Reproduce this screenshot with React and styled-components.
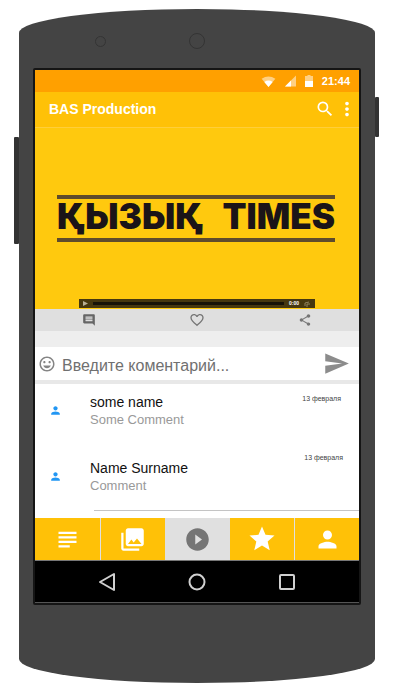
import React from 'react';
import styled, { createGlobalStyle } from 'styled-components';
import {
  MdSearch,
  MdMoreVert,
  MdComment,
  MdShare,
  MdSend,
  MdTagFaces,
  MdPerson,
  MdSubject,
  MdPhotoLibrary,
  MdPlayCircleFilled,
  MdStar,
  MdFavoriteBorder,
} from 'react-icons/md';

const GlobalStyle = createGlobalStyle`
  * { box-sizing: border-box; }
  body {
    margin: 0;
    background: #fff;
    font-family: "Liberation Sans", Arial, sans-serif;
  }
  svg { display: block; flex: none; }
`;

const Stage = styled.main`
  display: grid;
  grid-template-columns: 5px 1fr 4px;
  padding: 9px 27px 9px 14px;
`;

const SideButton = styled.div`
  height: ${(p) => p.$height}px;
  margin-top: ${(p) => p.$top}px;
  background: #333;
  border-radius: 1px;
`;

const Body = styled.div`
  background: #444;
  border-radius: 50% / 24px;
  padding: 0 14px 78px;
`;

const Sensors = styled.div`
  display: grid;
  grid-template-columns: 1fr auto 1fr;
  align-items: center;
  height: 59px;
  padding-top: 5px;
`;

const Lens = styled.span`
  width: ${(p) => p.$size}px;
  height: ${(p) => p.$size}px;
  border: 1px solid #343434;
  border-radius: 50%;
`;

const Proximity = styled(Lens)`
  justify-self: center;
  margin-right: 22px;
`;

const Screen = styled.div`
  border: 2px solid #151515;
  border-radius: 2px;
  background: #fff;
`;

const StatusBar = styled.div`
  display: flex;
  align-items: center;
  justify-content: flex-end;
  gap: 9px;
  height: 22px;
  padding-right: 9px;
  background: #ffa000;
  color: #fff;
  font-size: 11px;
  font-weight: 700;
`;

const AppBar = styled.header`
  display: flex;
  align-items: center;
  height: 36px;
  padding: 0 1px 2px 14px;
  background: #ffc107;
  border-bottom: 1px solid #ffce3a;
`;

const Title = styled.h1`
  flex: 1;
  margin: 0;
  color: #fff;
  font-size: 14px;
  line-height: 20px;
`;

const IconButton = styled.button`
  display: flex;
  align-items: center;
  justify-content: center;
  padding: 0;
  border: 0;
  background: none;
  color: ${(p) => p.$color || '#fff'};
  cursor: pointer;
`;

const SearchButton = styled(IconButton)`
  margin-right: 1px;
  svg { stroke: currentColor; }
`;

const Video = styled.section`
  display: flex;
  flex-direction: column;
  justify-content: space-between;
  height: 181px;
  background: #ffc90e;
`;

const Wordmark = styled.div`
  display: flex;
  justify-content: space-between;
  margin: 67px 24px 0 22px;
  height: 47px;
  border-top: 4px solid #5f4b2c;
  border-bottom: 4px solid #5f4b2c;
  color: #1b1418;
  font: 900 35px/34px Inter, sans-serif;
  white-space: nowrap;
`;

const Player = styled.div`
  display: flex;
  align-items: center;
  gap: 5px;
  height: 9px;
  margin: 0 44px 1px;
  padding: 0 5px 0 3px;
  background: #46380f;
  color: #fff;
  font-size: 5px;
  line-height: 9px;
  font-weight: 700;
`;

const Seek = styled.div`
  flex: 1;
  height: 3px;
  background: #171307;
`;

const Actions = styled.div`
  display: grid;
  grid-template-columns: repeat(3, 1fr);
  height: 22px;
  background: #dfdfdf;
`;

const Composer = styled.form`
  display: flex;
  align-items: center;
  height: 53px;
  padding: 0 9px 0 3px;
  border-top: 16px solid #eee;
  border-bottom: 4px solid #e8e8e8;
  background: #fff;
`;

const CommentInput = styled.input`
  flex: 1;
  min-width: 0;
  height: 32px;
  margin-left: 6px;
  padding: 4px 0 0;
  border: 0;
  outline: 0;
  background: none;
  color: #444;
  font: 16px "Liberation Sans", Arial, sans-serif;
  &::placeholder { color: #707070; opacity: 1; }
`;

const Comments = styled.ul`
  display: grid;
  gap: 6px;
  margin: 0;
  padding: 0;
  list-style: none;
`;

const CommentRow = styled.li`
  display: grid;
  grid-template-columns: 55px 1fr auto;
  height: 60px;
  color: #2196f3;
`;

const Avatar = styled.div`
  padding: 20px 0 0 14px;
`;

const Author = styled.div`
  padding-top: 9px;
  color: #111;
  font-size: 14px;
  line-height: 18px;
`;

const Message = styled.p`
  margin: 0;
  color: #999;
  font-size: 13px;
  line-height: 18px;
`;

const Posted = styled.time`
  padding: ${(p) => (p.$raised ? '4px 16px' : '11px 18px')};
  color: #444;
  font-size: 7px;
  line-height: 8px;
`;

const Divider = styled.hr`
  height: 1px;
  margin: 0 0 7px 59px;
  border: 0;
  background: #c4c4c4;
`;

const Tabs = styled.nav`
  display: grid;
  grid-template-columns: repeat(5, 1fr);
  height: 42px;
  background: #ffc107;
`;

const Tab = styled(IconButton)`
  background: ${(p) => (p.$active ? '#e0e0e0' : '#ffc107')};
  color: ${(p) => (p.$active ? '#757575' : '#fff')};
  & + & { border-left: 1px solid ${(p) => (p.$active ? '#e0e0e0' : '#ffd24d')}; }
`;

const SystemNav = styled.nav`
  display: grid;
  grid-template-columns: repeat(3, 90px);
  justify-content: center;
  height: 43px;
  border-top: 1px solid #777;
  border-bottom: 1px solid #555;
  background: #000;
`;

const COMMENTS = [
  { name: 'some name', text: 'Some Comment' },
  { name: 'Name Surname', text: 'Comment', raised: true },
];

const TABS = [
  { label: 'Feed', Icon: MdSubject, size: 27 },
  { label: 'Photos', Icon: MdPhotoLibrary, size: 27 },
  { label: 'Video', Icon: MdPlayCircleFilled, size: 27, active: true },
  { label: 'Favourites', Icon: MdStar, size: 30 },
  { label: 'Profile', Icon: MdPerson, size: 27 },
];

const WifiIcon = () => (
  <svg width="15" height="11" viewBox="0 0 15 12">
    <path d="M0 3Q7.500-2 15 3L7.500 12Z" fill="#ffd083" />
    <path d="M3 6.500Q7.500 3.500 12 6.500L7.500 12Z" fill="#fff" />
  </svg>
);

const SignalIcon = () => (
  <svg width="11" height="12" viewBox="0 0 11 12">
    <path d="M0 11.500L11 0.500V11.500Z" fill="#ffd083" />
    <path d="M0 11.500L6 5.500V11.500Z" fill="#fff" />
  </svg>
);

const BatteryIcon = () => (
  <svg width="8" height="12" viewBox="0 0 8 12">
    <path d="M2.500 0H5.500V1H8V6H0V1H2.500Z" fill="#ffd083" />
    <path d="M0 6H8V12H0Z" fill="#fff" />
  </svg>
);

const SystemIcon = ({ children }) => (
  <svg width="20" height="20" viewBox="0 0 20 20" fill="none" stroke="#d0d0d0" strokeWidth="2" strokeLinejoin="round">
    {children}
  </svg>
);

export default function App() {
  return (
    <>
      <GlobalStyle />
      <Stage>
        <SideButton $top={128} $height={107} />
        <Body>
          <Sensors>
            <Proximity $size={11} />
            <Lens $size={16} />
          </Sensors>
          <Screen>
            <StatusBar>
              <WifiIcon />
              <SignalIcon />
              <BatteryIcon />
              <span>21:44</span>
            </StatusBar>
            <AppBar>
              <Title>BAS Production</Title>
              <SearchButton aria-label="Search"><MdSearch size={20} /></SearchButton>
              <IconButton aria-label="More"><MdMoreVert size={22} /></IconButton>
            </AppBar>
            <Video>
              <Wordmark>
                <span>ҚЫЗЫҚ</span>
                <span>TIMES</span>
              </Wordmark>
              <Player>
                <svg width="6" height="5" viewBox="0 0 6 5"><path d="M1 0L6 2.500L1 5Z" fill="#b9b095" /></svg>
                <Seek />
                <span>0:00</span>
                <svg width="6" height="6" viewBox="0 0 6 6" fill="none" stroke="#91845e">
                  <path d="M1 5V2L5 1M3 6V3H6" />
                </svg>
              </Player>
            </Video>
            <Actions>
              <IconButton $color="#666" aria-label="Comments"><MdComment size={14} /></IconButton>
              <IconButton $color="#757575" aria-label="Like"><MdFavoriteBorder size={16} /></IconButton>
              <IconButton $color="#757575" aria-label="Share"><MdShare size={14} /></IconButton>
            </Actions>
            <Composer onSubmit={(e) => e.preventDefault()}>
              <IconButton type="button" $color="#858585" aria-label="Emoji"><MdTagFaces size={18} /></IconButton>
              <CommentInput aria-label="Комментарий" placeholder="Введите коментарий..." />
              <IconButton type="submit" $color="#8c8c8c" aria-label="Send"><MdSend size={27} /></IconButton>
            </Composer>
            <Comments>
              {COMMENTS.map((c) => (
                <CommentRow key={c.name}>
                  <Avatar><MdPerson size={13} /></Avatar>
                  <div>
                    <Author>{c.name}</Author>
                    <Message>{c.text}</Message>
                  </div>
                  <Posted $raised={c.raised}>13 февраля</Posted>
                </CommentRow>
              ))}
            </Comments>
            <Divider />
            <Tabs>
              {TABS.map(({ label, Icon, size, active }) => (
                <Tab key={label} $active={active} aria-label={label}><Icon size={size} /></Tab>
              ))}
            </Tabs>
            <SystemNav>
              <IconButton aria-label="Back"><SystemIcon><path d="M3 10L17 2V18Z" /></SystemIcon></IconButton>
              <IconButton aria-label="Home"><SystemIcon><circle cx="10" cy="10" r="7.500" /></SystemIcon></IconButton>
              <IconButton aria-label="Recent apps"><SystemIcon><rect x="3" y="3" width="14" height="14" rx="1" /></SystemIcon></IconButton>
            </SystemNav>
          </Screen>
        </Body>
        <SideButton $top={88} $height={40} />
      </Stage>
    </>
  );
}
